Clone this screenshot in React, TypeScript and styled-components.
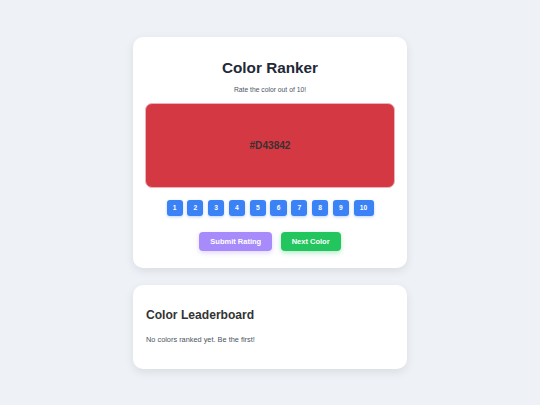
import React, { useState } from "react";
import styled, { createGlobalStyle } from "styled-components";

const GlobalStyle = createGlobalStyle`
  html, body {
    margin: 0;
    padding: 0;
    background: #eef1f5;
    font-family: "Liberation Sans", Arial, sans-serif;
  }
  * { box-sizing: border-box; }
`;

const Page = styled.main`
  display: flex;
  flex-direction: column;
  align-items: center;
  gap: 17px;
  padding: 37px 0 36px;
`;

const Card = styled.section<{ $tight?: boolean }>`
  width: 274px;
  background: #ffffff;
  border-radius: 10px;
  box-shadow: 0 3px 10px rgba(15, 23, 42, 0.09);
  padding: ${(p) => (p.$tight ? "23.5px 13px 23.4px" : "21.5px 13px 17px")};
  display: flex;
  flex-direction: column;
  align-items: ${(p) => (p.$tight ? "flex-start" : "center")};
`;

const Title = styled.h1`
  margin: 0;
  font-size: 15.3px;
  line-height: 18px;
  font-weight: 700;
  color: #1f2937;
`;

const Subtitle = styled.p`
  margin: 8.8px 0 0;
  font-size: 6.75px;
  line-height: 10px;
  color: #4b5563;
`;

const Swatch = styled.div`
  margin-top: 7.7px;
  width: 250px;
  height: 85px;
  border-radius: 7px;
  border: 1px solid #ebb3b8;
  display: flex;
  align-items: center;
  justify-content: center;
`;

const HexLabel = styled.span`
  font-size: 10.1px;
  font-weight: 700;
  color: #3a3133;
`;

const NumberRow = styled.div`
  margin-top: 12px;
  display: flex;
  gap: 4.7px;
`;

const NumberButton = styled.button<{ $active: boolean }>`
  height: 16px;
  min-width: 16px;
  padding: 0 6.2px;
  border: none;
  border-radius: 3px;
  background: ${(p) => (p.$active ? "#1d4ed8" : "#3b82f6")};
  color: #ffffff;
  font-family: inherit;
  font-size: 6.7px;
  font-weight: 700;
  box-shadow: 0 1px 3px rgba(59, 130, 246, 0.35);
  cursor: pointer;
`;

const ActionRow = styled.div`
  margin-top: 16px;
  display: flex;
  gap: 8.5px;
`;

const ActionButton = styled.button<{ $tone: string; $glow: string }>`
  height: 19px;
  padding: 0 11px;
  border: none;
  border-radius: 4px;
  background: ${(p) => p.$tone};
  color: #ffffff;
  font-family: inherit;
  font-size: 7.5px;
  font-weight: 700;
  box-shadow: 0 2px 5px ${(p) => p.$glow};
  cursor: pointer;
`;

const BoardTitle = styled.h2`
  margin: 0;
  font-size: 12.1px;
  line-height: 14px;
  font-weight: 700;
  color: #333333;
`;

const EmptyNote = styled.p`
  margin: 13px 0 0;
  font-size: 7.37px;
  line-height: 10px;
  color: #4b5563;
`;

export default function App() {
  const [color] = useState("#D43842");
  const [rating, setRating] = useState<number | null>(null);

  return (
    <>
      <GlobalStyle />
      <Page>
        <Card>
          <Title>Color Ranker</Title>
          <Subtitle>Rate the color out of 10!</Subtitle>
          <Swatch style={{ background: color }}>
            <HexLabel>{color}</HexLabel>
          </Swatch>
          <NumberRow>
            {Array.from({ length: 10 }, (_, i) => i + 1).map((n) => (
              <NumberButton key={n} $active={rating === n} onClick={() => setRating(n)}>
                {n}
              </NumberButton>
            ))}
          </NumberRow>
          <ActionRow>
            <ActionButton $tone="#a78bfa" $glow="rgba(167, 139, 250, 0.35)">
              Submit Rating
            </ActionButton>
            <ActionButton $tone="#22c55e" $glow="rgba(34, 197, 94, 0.35)">
              Next Color
            </ActionButton>
          </ActionRow>
        </Card>
        <Card $tight>
          <BoardTitle>Color Leaderboard</BoardTitle>
          <EmptyNote>No colors ranked yet. Be the first!</EmptyNote>
        </Card>
      </Page>
    </>
  );
}
